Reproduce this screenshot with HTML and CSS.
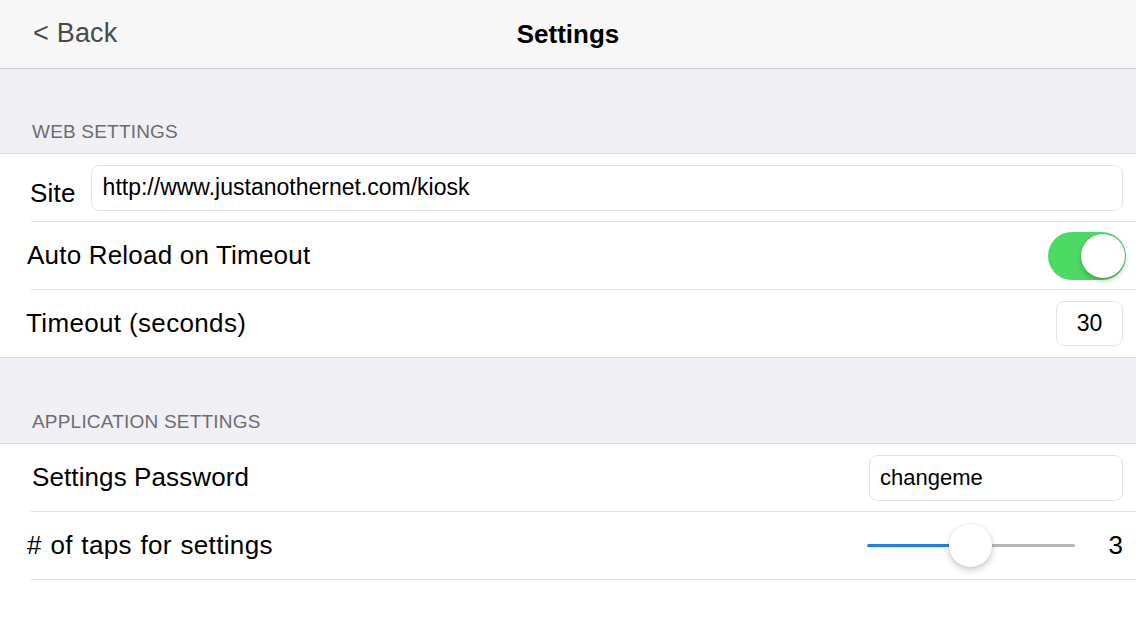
FILE: index.html
```html
<!DOCTYPE html>
<html lang="en">

<head>
    <meta charset="UTF-8">
    <meta name="viewport" content="width=device-width, initial-scale=1.0">
    <title>Settings</title>
    <link rel="stylesheet" href="styles.css">
</head>

<body>
    <div class="nav-bar">
        <div class="back">&lt; Back</div>
        <div class="title">Settings</div>
    </div>

    <div class="section-header">WEB SETTINGS</div>
    <div class="group">
        <div class="row">
            <div class="label label-site">Site</div>
            <div class="text-field site-field">http://www.justanothernet.com/kiosk</div>
        </div>
        <div class="row">
            <div class="label label-auto">Auto Reload on Timeout</div>
            <div class="toggle">
                <div class="knob"></div>
            </div>
        </div>
        <div class="row last">
            <div class="label label-timeout">Timeout (seconds)</div>
            <div class="text-field timeout-field">30</div>
        </div>
    </div>

    <div class="section-header tall">APPLICATION SETTINGS</div>
    <div class="group open">
        <div class="row">
            <div class="label label-password">Settings Password</div>
            <div class="text-field password-field">changeme</div>
        </div>
        <div class="row">
            <div class="label label-taps"># of taps for settings</div>
            <div class="slider">
                <div class="fill"></div>
                <div class="rest"></div>
                <div class="thumb"></div>
            </div>
            <div class="slider-value">3</div>
        </div>
    </div>
</body>

</html>
```

FILE: styles.css
```css
body {
    font-family: "Liberation Sans", Arial, sans-serif;
    background-color: #ffffff;
    color: #000000;
    margin: 0;
}

.nav-bar {
    height: 68px;
    background-color: #f7f7f7;
    border-bottom: 1px solid #c9c9cc;
    display: flex;
    align-items: center;
    justify-content: center;
    position: relative;
}

.back {
    position: absolute;
    left: 33px;
    top: 18px;
    font-size: 27px;
    letter-spacing: 0.2px;
    color: #4a4a4a;
}

.title {
    font-size: 26px;
    font-weight: bold;
    color: #000000;
}

.section-header {
    height: 84px;
    background-color: #efeff4;
    box-sizing: border-box;
    padding: 0 0 12px 32px;
    display: flex;
    align-items: flex-end;
    font-size: 19px;
    line-height: 19px;
    letter-spacing: 0.2px;
    color: #6d6d72;
}

.section-header.tall {
    height: 85px;
}

.group {
    border-top: 1px solid #dcdcdf;
    border-bottom: 1px solid #dcdcdf;
    background-color: #ffffff;
}

.group.open {
    border-bottom: none;
}

.row {
    height: 67px;
    margin-left: 31px;
    padding-right: 13px;
    border-bottom: 1px solid #e2e2e4;
    display: flex;
    align-items: center;
}

.row.last {
    border-bottom: none;
}

.label {
    font-size: 26px;
    letter-spacing: 0.2px;
    flex: 1;
    white-space: nowrap;
}

.label-site {
    flex: none;
    margin-left: -1px;
    margin-top: 12px;
    margin-right: 15px;
}

.label-auto {
    margin-left: -4px;
}

.label-taps {
    margin-left: -4px;
    word-spacing: 1px;
    letter-spacing: 0.35px;
}

.label-timeout {
    margin-left: -5px;
    letter-spacing: 0.35px;
}

.label-password {
    margin-left: 1px;
    letter-spacing: 0.1px;
}

.text-field {
    height: 46px;
    box-sizing: border-box;
    border: 1px solid #e3e3e6;
    border-radius: 8px;
    background-color: #ffffff;
    display: flex;
    align-items: center;
    font-size: 22px;
}

.site-field {
    flex: 1;
    padding-left: 11px;
    font-size: 23px;
    padding-bottom: 1px;
}

.timeout-field {
    width: 67px;
    height: 45px;
    justify-content: center;
    font-size: 23px;
}

.password-field {
    width: 254px;
    padding-left: 10px;
}

.toggle {
    width: 78px;
    height: 48px;
    margin-right: -3px;
    border-radius: 24px;
    background-color: #4cd964;
    display: flex;
    align-items: center;
    justify-content: flex-end;
    padding-right: 1px;
    box-sizing: border-box;
}

.knob {
    width: 44px;
    height: 44px;
    border-radius: 50%;
    background-color: #ffffff;
    box-shadow: 0 3px 5px rgba(0, 0, 0, 0.22), 0 0 0 1px rgba(0, 0, 0, 0.04);
}

.slider {
    width: 208px;
    height: 3px;
    display: flex;
    position: relative;
}

.fill {
    width: 82px;
    background-color: #1a7ff5;
    border-radius: 2px 0 0 2px;
}

.rest {
    flex: 1;
    background-color: #b6b6b8;
    border-radius: 0 2px 2px 0;
}

.thumb {
    position: absolute;
    left: 82px;
    top: -20px;
    width: 43px;
    height: 43px;
    border-radius: 50%;
    background-color: #ffffff;
    box-shadow: 0 3px 7px rgba(0, 0, 0, 0.22), 0 0 0 1px rgba(0, 0, 0, 0.03);
}

.slider-value {
    margin-left: 34px;
    font-size: 26px;
}
```
